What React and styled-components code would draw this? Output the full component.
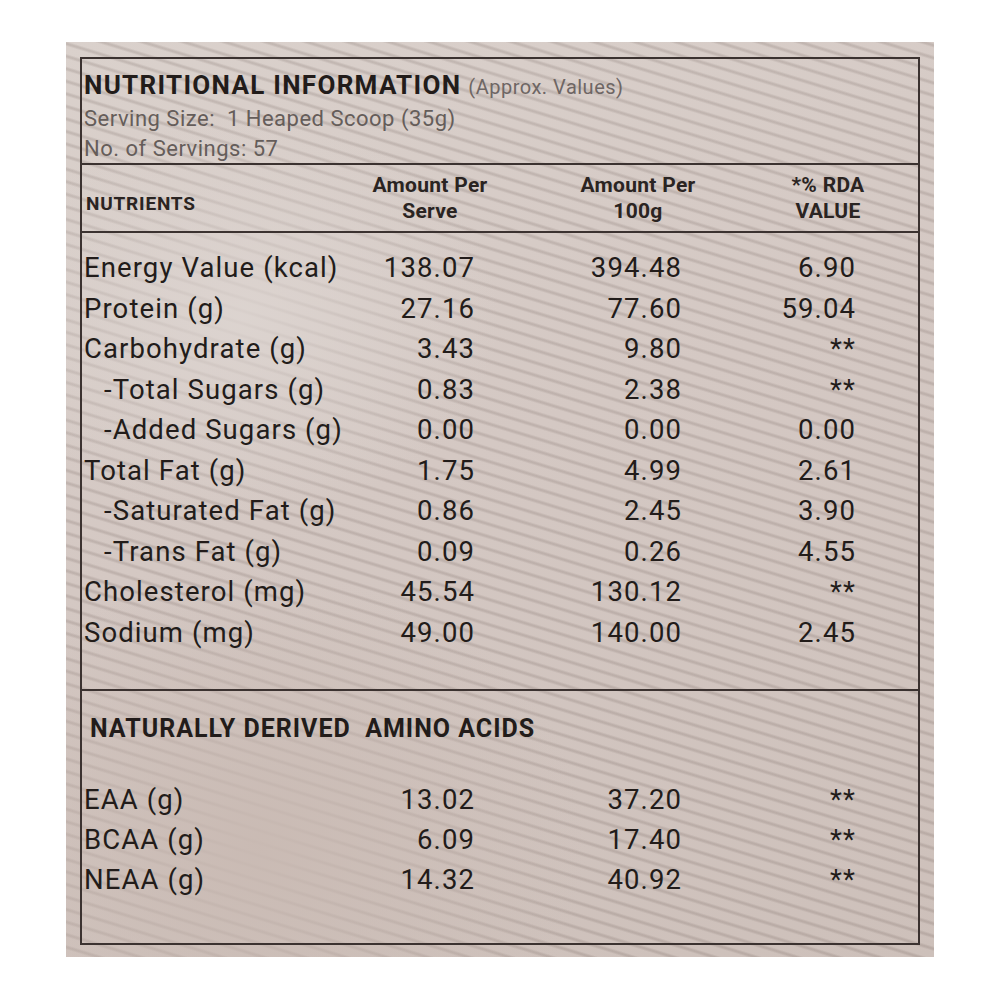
import React from "react";
import styled, { createGlobalStyle } from "styled-components";

const Global = createGlobalStyle`
  html, body { margin: 0; padding: 0; background: #ffffff; }
  body { font-family: Roboto, "Noto Sans", Arial, sans-serif; }
`;

const Page = styled.div`
  width: 1000px;
  height: 1000px;
  padding: 42px 0 0 66px;
  box-sizing: border-box;
`;

const Panel = styled.div`
  width: 868px;
  height: 915px;
  box-sizing: border-box;
  padding: 15px 14px 12px 14px;
  background:
    radial-gradient(ellipse 38% 30% at 22% 88%, rgba(201, 186, 179, 0.95), rgba(201, 186, 179, 0) 100%),
    radial-gradient(ellipse 30% 22% at 20% 30%, rgba(221, 213, 209, 0.85), rgba(221, 213, 209, 0) 100%),
    repeating-linear-gradient(
      17deg,
      rgba(70, 52, 46, 0) 0px,
      rgba(70, 52, 46, 0) 7px,
      rgba(70, 52, 46, 0.15) 9px,
      rgba(70, 52, 46, 0.15) 10px,
      rgba(70, 52, 46, 0) 12px
    ),
    linear-gradient(160deg, #dad1cc 0%, #d4c8c3 45%, #cdc0ba 100%);
`;

const Box = styled.div`
  height: 100%;
  box-sizing: border-box;
  border: 2px solid #3b3230;
  display: flex;
  flex-direction: column;
  color: #221c1a;
`;

const TitleBlock = styled.div`
  padding: 10px 0 0 2px;
  border-bottom: 2px solid #3b3230;
`;

const TitleLine = styled.div`
  display: flex;
  align-items: baseline;
  gap: 7px;
  height: 33px;
  line-height: 33px;
`;

const Title = styled.span`
  font-size: 26px;
  font-weight: 700;
  letter-spacing: 1.3px;
  color: #221c1a;
`;

const Approx = styled.span`
  font-size: 20px;
  letter-spacing: 0.5px;
  color: #6e6664;
`;

const InfoLine = styled.div`
  font-size: 22px;
  letter-spacing: 0.5px;
  color: #655d5a;
  height: ${(p) => p.$h}px;
  line-height: ${(p) => p.$h}px;
`;

const HeaderRow = styled.div`
  display: grid;
  grid-template-columns: 266px 164px 252px 128px;
  align-items: center;
  height: 66px;
  border-bottom: 2px solid #3b3230;
`;

const HeadLabel = styled.div`
  padding: 10px 0 0 4px;
  font-size: 19px;
  font-weight: 700;
  letter-spacing: 0.8px;
  color: #2a2422;
`;

const HeadCell = styled.div`
  text-align: center;
  font-size: 21px;
  font-weight: 700;
  line-height: 26px;
  letter-spacing: 0.3px;
  color: #2a2422;
`;

const Body = styled.div`
  padding: ${(p) => p.$pad};
  border-bottom: ${(p) => (p.$divider ? "2px solid #3b3230" : "none")};
  flex: ${(p) => (p.$grow ? 1 : "none")};
`;

const Row = styled.div`
  display: grid;
  grid-template-columns: 300px 93px 207px 174px;
  height: ${(p) => p.$h}px;
  line-height: ${(p) => p.$h}px;
  font-size: 27.5px;
  letter-spacing: 1.1px;
`;

const Label = styled.div`
  padding-left: ${(p) => (p.$indent ? 22 : 2)}px;
  white-space: nowrap;
`;

const Value = styled.div`
  text-align: right;
`;

const SectionTitle = styled.div`
  padding-left: 8px;
  height: 30px;
  line-height: 30px;
  font-size: 25px;
  font-weight: 700;
  letter-spacing: 1px;
  white-space: pre;
  color: #221c1a;
  margin-bottom: 36px;
`;

const nutrients = [
  { label: "Energy Value (kcal)", a: "138.07", b: "394.48", c: "6.90" },
  { label: "Protein (g)", a: "27.16", b: "77.60", c: "59.04" },
  { label: "Carbohydrate (g)", a: "3.43", b: "9.80", c: "**" },
  { label: "-Total Sugars (g)", a: "0.83", b: "2.38", c: "**", indent: true },
  { label: "-Added Sugars (g)", a: "0.00", b: "0.00", c: "0.00", indent: true },
  { label: "Total Fat (g)", a: "1.75", b: "4.99", c: "2.61" },
  { label: "-Saturated Fat (g)", a: "0.86", b: "2.45", c: "3.90", indent: true },
  { label: "-Trans Fat (g)", a: "0.09", b: "0.26", c: "4.55", indent: true },
  { label: "Cholesterol (mg)", a: "45.54", b: "130.12", c: "**" },
  { label: "Sodium (mg)", a: "49.00", b: "140.00", c: "2.45" },
];

const amino = [
  { label: "EAA (g)", a: "13.02", b: "37.20", c: "**" },
  { label: "BCAA (g)", a: "6.09", b: "17.40", c: "**" },
  { label: "NEAA (g)", a: "14.32", b: "40.92", c: "**" },
];

function DataRow({ item, h }) {
  return (
    <Row $h={h}>
      <Label $indent={item.indent}>{item.label}</Label>
      <Value>{item.a}</Value>
      <Value>{item.b}</Value>
      <Value>{item.c}</Value>
    </Row>
  );
}

export default function App() {
  return (
    <>
      <Global />
      <Page>
        <Panel>
          <Box>
            <TitleBlock>
              <TitleLine>
                <Title>NUTRITIONAL INFORMATION</Title>
                <Approx>(Approx. Values)</Approx>
              </TitleLine>
              <InfoLine $h={33}>Serving Size:&nbsp; 1 Heaped Scoop (35g)</InfoLine>
              <InfoLine $h={28}>No. of Servings: 57</InfoLine>
            </TitleBlock>
            <HeaderRow>
              <HeadLabel>NUTRIENTS</HeadLabel>
              <HeadCell>
                Amount Per
                <br />
                Serve
              </HeadCell>
              <HeadCell>
                Amount Per
                <br />
                100g
              </HeadCell>
              <HeadCell>
                *% RDA
                <br />
                VALUE
              </HeadCell>
            </HeaderRow>
            <Body $pad="15px 0 36px 0" $divider>
              {nutrients.map((n) => (
                <DataRow key={n.label} item={n} h={40.5} />
              ))}
            </Body>
            <Body $pad="23px 0 0 0" $grow>
              <SectionTitle>{"NATURALLY DERIVED  AMINO ACIDS"}</SectionTitle>
              {amino.map((n) => (
                <DataRow key={n.label} item={n} h={40} />
              ))}
            </Body>
          </Box>
        </Panel>
      </Page>
    </>
  );
}
